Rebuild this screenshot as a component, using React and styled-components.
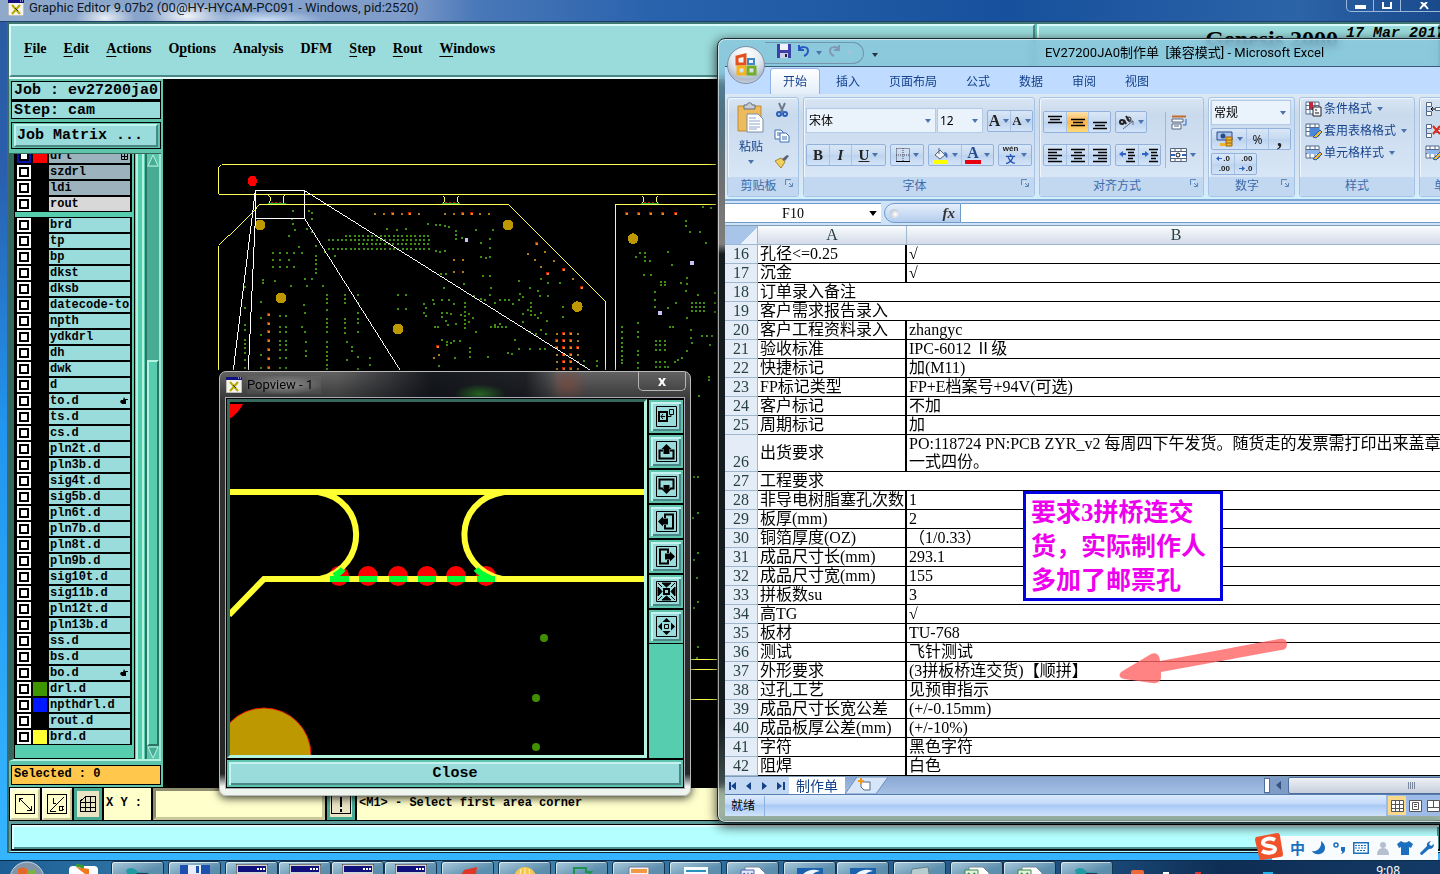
import React from "react";
import styled, { createGlobalStyle, css } from "styled-components";

const GlobalStyle = createGlobalStyle`
    *{
        box-sizing:border-box;
    }

    body{
        margin:0;
        overflow:hidden;
        background:#000;
    }

    button, input, select{
        margin:0;
        padding:0;
        border:0;
        border-radius:0;
        background:none;
        color:inherit;
        font:inherit;
        outline:none;
    }
`

const mono = `"Liberation Mono","Courier New",monospace`;
const serif = `"Liberation Serif","Noto Sans CJK SC",serif`;
const sans = `"Noto Sans","Noto Sans CJK SC",sans-serif`;
const caption = `Roboto,"Noto Sans CJK SC",sans-serif`;

const bevelOut = css`
    border:2px solid;
    border-color:#bff3ef #4b8786 #4b8786 #bff3ef;
`

const Desktop = styled.main`
    position:relative;
    display:flex;
    flex-direction:column;
    height:100vh;
    overflow:hidden;
    font-family:${sans};
    font-size:12px;
    color:#000;
`

/* ---------- editor window ---------- */

const EditorWindow = styled.section`
    flex:1;
    min-height:0;
    display:flex;
    flex-direction:column;
    padding:0 0 7px 7px;
    border-bottom:1px solid #0b2c4d;
    background:linear-gradient(#2b5b9f 0, #2a5fae 20%, #2196f0 50%, #35b5ff 100%);
`

const EditorTitle = styled.header`
    flex:none;
    display:flex;
    align-items:flex-start;
    gap:5px;
    height:22px;
    margin-left:-7px;
    padding-left:8px;
    overflow:hidden;
    color:#0b1622;
    font:13px/15px ${caption};
    background:
        radial-gradient(ellipse 30px 14px at 105px 18px, rgba(255,255,255,.8), transparent),
        radial-gradient(ellipse 40px 14px at 187px 16px, rgba(255,255,255,.9), transparent),
        radial-gradient(ellipse 60px 10px at 265px 20px, rgba(220,238,255,.8), transparent),
        linear-gradient(90deg, #8fa9cb 0, #7f9cca 28%, #4a78b8 33%, #2a63ad 45%, #17509c 70%, #2c64a8 90%, #194a8c 100%);
    border-bottom:1px solid #1e3f6c;
`

const TitleIcon = styled.svg`
    flex:none;
    width:16px;
    height:16px;
`

const WindowControls = styled.div`
    display:flex;
    height:12px;
    margin-left:auto;
    margin-right:-8px;
    border:1px solid #9bb8dc;
    border-top:0;
    border-radius:0 0 5px 5px;
    overflow:hidden;

    button{
        display:grid;
        place-items:center;
        width:27px;
        height:11px;
        color:#fff;
        border-right:1px solid #9bb8dc;
    }

    button:last-child{
        width:46px;
        border-right:0;
    }
`

const EditorBody = styled.div`
    flex:1;
    min-height:0;
    display:flex;
    flex-direction:column;
    background:#5fc4ac;
    border-left:2px solid #3c6b68;
`

const MenuRow = styled.div`
    flex:none;
    display:flex;
    height:57px;
    border-top:2px solid #3f7774;
    border-bottom:2px solid #e4fbfa;
`

const MenuBar = styled.nav`
    display:flex;
    align-items:center;
    gap:17px;
    width:1026px;
    padding:0 13px 4px;
    border:2px solid;
    border-color:#d8fbf9 #4b8786 #4b8786 #d8fbf9;
    background:#9adbdb;
    font:bold 14px/20px ${serif};

    u{
        text-underline-offset:3px;
        text-decoration-thickness:1px;
    }
`

const Brand = styled.div`
    flex:1;
    display:flex;
    align-items:flex-start;
    justify-content:flex-end;
    gap:8px;
    margin-left:2px;
    white-space:nowrap;
    border:2px solid;
    border-color:#d8fbf9 #4b8786 #4b8786 #d8fbf9;
    background:#9adbdb;

    strong{
        font:bold 24px/26px ${serif};
    }

    time{
        font:italic bold 15px/16px ${mono};
        width:92px;
    }
`

const WorkRow = styled.div`
    flex:1;
    min-height:0;
    display:flex;
    background:#000;
`

const Sidebar = styled.aside`
    flex:none;
    display:flex;
    flex-direction:column;
    width:154px;
    padding:2px;
    background:#5fc4ac;
`

const InfoLine = styled.div`
    flex:none;
    height:19px;
    padding:0 2px;
    border:1px solid #000;
    background:#9adbdb;
    font:bold 15px/18px ${mono};
    white-space:nowrap;

    & + &{
        border-top-width:2px;
    }
`

const MatrixFrame = styled.div`
    flex:none;
    height:27px;
    margin:3px 0 4px;
    padding:1px 2px;
    border:1px solid #000;

    button{
        display:block;
        width:100%;
        height:23px;
        padding:0 1px;
        text-align:left;
        background:#9adbdb;
        font:bold 15px/18px ${mono};
        ${bevelOut}
    }
`

const ListWell = styled.div`
    flex:1;
    min-height:0;
    display:flex;
    margin-left:-2px;
    border-left:5px solid #35695c;
    border-top:1px solid #35695c;
    border-bottom:2px solid #b4f3e0;
`

const LayerColumn = styled.div`
    flex:none;
    width:121px;
    overflow:hidden;
    border:1px solid #000;
    border-top:0;
    padding-right:2px;
    background:#55cdae;
`

const LayerBlock = styled.div`
    background:#000;
    padding:1px 2px;
    margin-bottom:5px;
    margin-top:${p => (p.$clipped ? "-6px" : "0")};
`

const LayerRow = styled.label`
    display:grid;
    grid-template-columns:14px 14px 1fr;
    column-gap:2px;
    height:14px;
    margin-bottom:2px;
    background:#000;

    &:last-child{
        margin-bottom:0;
    }

    input{
        appearance:none;
        width:14px;
        height:14px;
        border:2px solid ${p => (p.$marked ? "#0b14a8" : "#fff")};
        background:#fff;
        box-shadow:inset 0 0 0 2px #000;
    }
`

const Swatch = styled.i`
    background:${p => p.$color || "#000"};
`

const LayerName = styled.span`
    display:flex;
    align-items:center;
    justify-content:space-between;
    padding:0 2px 0 1px;
    overflow:hidden;
    background:${p => p.$tone || "#9adbdb"};
    font:bold 12px/14px ${mono};
    white-space:nowrap;
`

const Rails = styled.div`
    width:12px;
    border-right:2px solid #2a7565;
    background:linear-gradient(90deg, #55cdae 1px, #b4f3e0 1px 3px, #55cdae 3px 7px, #b4f3e0 7px 9px, #55cdae 9px);
`

const ScrollTrack = styled.div`
    flex:1;
    display:flex;
    flex-direction:column;
    border-right:2px solid #9fe8d5;
    background:#48ac94;

    svg{
        flex:none;
        display:block;
    }
`

const ScrollGap = styled.div`
    flex:195 1 0;
`

const ScrollThumb = styled.div`
    flex:385 1 0;
    border:2px solid;
    border-color:#b4f3e0 #2a7565 #2a7565 #b4f3e0;
    background:#55cdae;
`

const Selected = styled.div`
    flex:none;
    height:20px;
    margin-top:4px;
    padding:0 2px;
    border:1px solid #000;
    background:#ffc84c;
    font:bold 12px/16px ${mono};
`

const Board = styled.div`
    flex:1;
    min-width:0;
    overflow:hidden;
    background:#000;

    svg{
        display:block;
    }
`

const CommandRow = styled.div`
    flex:none;
    display:flex;
    gap:2px;
    height:34px;
    padding:1px 0 1px 1px;
    background:#000;
    font:bold 12px/30px ${mono};
`

const CommandButton = styled.button`
    display:grid;
    place-items:center;
    width:${p => (p.$on ? "28px" : "30px")};
    border:2px solid;
    border-color:#fffff0 #c9c79c #c9c79c #fffff0;
    background:#ffffcc;
    ${p => p.$on && css`
        border:3px solid #45a993;
        background:#e8e4c4;
    `}
`

const CoordLabel = styled.label`
    width:47px;
    padding-left:2px;
    background:#ffffcc;
`

const CoordInput = styled.input`
    width:172px;
    padding:0 6px;
    border:3px solid;
    border-color:#8f8d70 #c9c79c #c9c79c #8f8d70;
    background:#ffffcc;
`

const Message = styled.output`
    flex:1;
    padding-left:2px;
    background:#ffffcc;
    white-space:nowrap;
`

const MessageBar = styled.div`
    flex:none;
    height:32px;
    margin-right:-2px;
    border:2px solid #5f9c9c;
    border-top-width:3px;
    border-bottom:3px double #123;
    background:#b4ffff;
    box-shadow:inset 0 0 0 1px #000, inset 3px 3px 0 #e6ffff, inset -3px -3px 0 #4f9090;
`

/* ---------- popview window ---------- */

const PopWindow = styled.section`
    position:absolute;
    left:219px;
    top:371px;
    width:472px;
    height:425px;
    display:flex;
    flex-direction:column;
    padding:0 6px 7px;
    border:1px solid #b9b9b9;
    border-radius:7px;
    background:
        radial-gradient(ellipse 26px 10px at 260px 22px, rgba(50,150,40,.6), transparent),
        radial-gradient(ellipse 20px 20px at 348px 12px, rgba(150,70,55,.45), transparent),
        linear-gradient(90deg, transparent 25%, rgba(5,8,15,.8) 45%, rgba(5,8,15,.7) 65%, transparent 72%) 0 0 / 100% 26px no-repeat,
        linear-gradient(rgba(130,130,130,.75) 0, rgba(75,75,75,.7) 30px, rgba(50,55,52,.7) 95%, #eef5ee 98%);
    backdrop-filter:blur(5px);
    box-shadow:0 2px 8px rgba(0,0,0,.8);
`

const PopTitle = styled.header`
    flex:none;
    display:flex;
    align-items:center;
    gap:5px;
    height:26px;
    color:#050505;
    font:13px/18px ${caption};

    span{
        padding:0 8px 0 0;
        background:radial-gradient(ellipse, rgba(160,160,160,.8), rgba(150,150,150,.1) 75%);
    }

    button{
        align-self:flex-start;
        width:48px;
        height:19px;
        margin-left:auto;
        margin-right:-2px;
        border:1px solid #b4b4b4;
        border-top:0;
        border-radius:0 0 5px 5px;
        color:#fff;
        font:bold 14px/16px ${sans};
    }
`

const PopClient = styled.div`
    flex:1;
    min-height:0;
    display:flex;
    flex-direction:column;
    border:1px solid #000;
    outline:1px solid #aab;
    background:#000;
`

const PopMain = styled.div`
    flex:1;
    min-height:0;
    display:flex;
    gap:2px;
`

const PopCanvas = styled.div`
    flex:1;
    min-width:0;
    overflow:hidden;
    border:3px solid;
    border-color:#35695c #b4f3e0 #b4f3e0 #35695c;
    background:#000;

    svg{
        display:block;
    }
`

const ToolColumn = styled.div`
    display:flex;
    flex-direction:column;
    gap:2px;
    width:34px;
    padding-top:1px;
    background:linear-gradient(#000 245px, #55cdae 245px);

    button{
        display:grid;
        place-items:center;
        height:33px;
        border:2px solid #5fc4ac;
        background:#9adbdb;
        box-shadow:inset 2px 2px 0 #c5f3f1, inset -2px -2px 0 #4b8786;
    }
`

const PopClose = styled.button`
    flex:none;
    height:27px;
    margin-top:2px;
    border:2px solid #5fc4ac;
    background:#9adbdb;
    box-shadow:inset 2px 2px 0 #c5f3f1, inset -2px -2px 0 #4b8786;
    font:bold 15px/20px ${mono};
`

/* ---------- spreadsheet window ---------- */

const SheetWindow = styled.section`
    position:absolute;
    left:717px;
    right:-14px;
    top:38px;
    display:flex;
    flex-direction:column;
    padding:0 7px 6px;
    border:1px solid #1b2a30;
    border-radius:8px;
    background:linear-gradient(rgba(135,195,222,.74) 0, rgba(125,185,215,.62) 70px, rgba(150,150,150,.75) 150px, rgba(170,170,170,.75) 205px, rgba(40,55,60,.5) 215px, rgba(40,55,60,.5) 680px, rgba(120,150,150,.7) 100%);
    backdrop-filter:blur(4px);
    box-shadow:inset 0 0 0 1px rgba(255,255,255,.6), 0 3px 12px rgba(0,0,0,.8);
`

const SheetTitle = styled.header`
    display:flex;
    align-items:center;
    height:27px;
    padding-left:40px;

    h1{
        flex:1;
        margin:0;
        padding-left:45px;
        font:400 13px/18px ${caption};
        text-align:center;
        white-space:pre;
    }
`

const Orb = styled.button`
    position:absolute;
    left:9px;
    top:7px;
    display:grid;
    place-items:center;
    width:38px;
    height:38px;
    border:1px solid #7e8fa5;
    border-radius:50%;
    background:radial-gradient(circle at 50% 20%, #fff 0, #e4e9f0 45%, #b0bccb 75%, #eef3f8 100%);
`

const QuickBar = styled.div`
    display:flex;
    align-items:center;
    gap:6px;
    height:22px;
    padding:0 10px 0 12px;
    border:1px solid #7396ad;
    border-left:0;
    border-radius:0 11px 11px 0;
`

const QuickMore = styled.button`
    margin-left:8px;
`

const Tabs = styled.nav`
    display:flex;
    align-items:flex-end;
    gap:5px;
    height:28px;
    padding-left:46px;
    border-top:1px solid #3a5a7a;
    background:#bfdbff;
`

const Tab = styled.button`
    height:25px;
    padding:0 12px;
    border-radius:3px 3px 0 0;
    color:#15428b;
    line-height:20px;
    ${p => p.$active && css`
        background:linear-gradient(#fff, #e3edf9);
        box-shadow:0 0 0 1px #8db2e3;
    `}
`

const Ribbon = styled.div`
    display:flex;
    gap:4px;
    height:107px;
    padding:3px 2px;
    overflow:hidden;
    border-bottom:2px solid #7fa5d6;
    background:linear-gradient(#dde8f4, #c9daed 20%, #d8e6f6 80%, #d0f0fc);
    color:#15428b;
`

const Group = styled.fieldset`
    flex:none;
    display:flex;
    flex-direction:column;
    width:${p => p.$w}px;
    min-width:0;
    height:100px;
    margin:0;
    padding:0;
    border:1px solid #a6c3e4;
    border-radius:3px;
    overflow:hidden;
    box-shadow:inset 1px 1px 0 #eff6fd;
`

const GroupBody = styled.div`
    flex:1;
    display:flex;
    gap:${p => p.$gap || 0}px;
    flex-direction:${p => (p.$column ? "column" : "row")};
    padding:${p => p.$pad || "4px 3px"};
`

const GroupLabel = styled.div`
    display:flex;
    height:19px;
    padding:0 4px;
    background:#c1d8f0;
    color:#3e6aaa;
    line-height:18px;

    span{
        flex:1;
        text-align:center;
    }

    svg{
        margin-top:2px;
    }
`

const Stack = styled.div`
    display:flex;
    flex-direction:column;
    align-items:${p => p.$align || "flex-start"};
    gap:${p => p.$gap || 0}px;
    padding-top:${p => p.$top || 0}px;
`

const Line = styled.div`
    display:flex;
    align-items:center;
    gap:${p => p.$gap || 4}px;
`

const PasteButton = styled.button`
    display:flex;
    flex-direction:column;
    align-items:center;
    gap:4px;
    width:46px;
    line-height:18px;
`

const Combo = styled.label`
    display:flex;
    align-items:center;
    width:${p => p.$w}px;
    height:25px;
    padding:0 4px 0 2px;
    border:1px solid #b3cbe6;
    background:#eaf2fb;
    color:#000;

    select{
        flex:1;
        min-width:0;
        appearance:none;
    }
`

const Segment = styled.div`
    display:flex;
    height:22px;
    border:1px solid #92b2db;
    border-radius:2px;
    background:linear-gradient(#d9e7f7, #c6d9f0 50%, #bcd2ee 50%, #d3e4f8);

    button + button{
        border-left:1px solid #a9c3e4;
    }
`

const Tool = styled.button`
    display:flex;
    align-items:center;
    justify-content:center;
    gap:3px;
    width:${p => p.$w || 22}px;
    color:#222;
    ${p => p.$on && css`
        background:linear-gradient(#fde3a9, #fbb54c 50%, #fdd876);
    `}
`

const Glyph = styled.span`
    font:${p => (p.$italic ? "italic " : "")}bold ${p => p.$size || 15}px/18px "Liberation Serif",serif;
    text-decoration:${p => (p.$under ? "underline" : "none")};
`

const Divider = styled.i`
    width:1px;
    height:56px;
    margin:10px 4px 0;
    background:#9cb9dc;
`

const StyleButton = styled.button`
    display:flex;
    align-items:center;
    gap:2px;
    height:22px;
    color:#15428b;
    line-height:18px;
    white-space:nowrap;

    span{
        margin-right:3px;
    }
`

const FormulaRow = styled.div`
    display:flex;
    align-items:center;
    height:25px;
    border-bottom:1px solid #7f9db9;
    background:#cfe3f8;
    font:16px/19px ${serif};
`

const NameBox = styled.label`
    display:flex;
    align-items:center;
    width:156px;
    height:20px;
    padding-right:4px;
    background:#fff;
    border-top:1px solid #6f9bc8;
    border-bottom:1px solid #6f9bc8;

    input{
        flex:1;
        min-width:0;
        padding-right:8px;
        text-align:center;
        font-size:14px;
    }

    svg{
        width:8px;
        height:5px;
    }
`

const FxButton = styled.button`
    display:flex;
    align-items:center;
    justify-content:space-between;
    width:77px;
    height:20px;
    margin-left:3px;
    padding:0 5px;
    border:1px solid #6f9bc8;
    border-radius:10px 0 0 10px;
    background:linear-gradient(#e5effb, #b4cdee);
    font:italic bold 15px/18px ${serif};
    color:#333;

    i{
        width:9px;
        height:9px;
        border-radius:50%;
        background:radial-gradient(circle at 60% 60%, #fff, #a5b1c2);
    }
`

const FormulaInput = styled.input`
    flex:1;
    height:20px;
    background:#fff;
    border-top:1px solid #6f9bc8;
    border-bottom:1px solid #6f9bc8;
`

const SheetArea = styled.div`
    position:relative;
    background:#fff;
`

const Grid = styled.table`
    width:100%;
    table-layout:fixed;
    border-collapse:separate;
    border-spacing:0;
    font:16px/18px ${serif};

    th, td{
        height:19px;
        padding:0 2px;
        overflow:hidden;
        white-space:nowrap;
        text-align:left;
        font-weight:400;
    }

    td{
        border-bottom:1px solid #000;
        border-right:2px solid #000;
    }

    td:last-child{
        border-right:0;
    }

    thead th{
        text-align:center;
        color:#27413e;
        border-right:1px solid #9eb6ce;
        border-bottom:1px solid #9eb6ce;
        background:linear-gradient(#f9fcfd, #d3dbe9);
    }

    thead th:first-child{
        background:linear-gradient(135deg, #a9c4e9 68%, #eaf1fa 68%);
    }

    tbody th{
        text-align:center;
        vertical-align:bottom;
        color:#27413e;
        border-right:1px solid #9eb6ce;
        border-bottom:1px solid #9eb6ce;
        background:#e4ecf7;
    }
`

const Callout = styled.aside`
    position:absolute;
    left:298px;
    top:265px;
    width:200px;
    height:110px;
    padding:2px 5px;
    border:3px solid #0000e0;
    background:#fff;
    color:#ee00ee;
    font:bold 25px/34px ${serif};
    white-space:nowrap;
`

const PointerArrow = styled.svg`
    position:absolute;
    left:390px;
    top:411px;
`

const SheetTabs = styled.div`
    display:flex;
    align-items:stretch;
    height:18px;
    border-top:1px solid #7f9db9;
    background:linear-gradient(#89a8d4, #a5c0e4);
`

const NavButtons = styled.div`
    display:flex;
    width:64px;
    background:#c3d8f2;

    button{
        flex:1;
        display:grid;
        place-items:center;
    }
`

const SheetTab = styled.button`
    width:56px;
    padding:0 6px;
    background:#fff;
    color:#15428b;
    font-size:14px;
    line-height:16px;
    white-space:nowrap;
`

const ScrollEnd = styled.div`
    display:flex;
    align-items:center;
    gap:6px;
    width:182px;
    margin-left:auto;
    background:#7f9cc6;
`

const SplitHandle = styled.i`
    width:6px;
    height:15px;
    border:1px solid #4e6c9c;
    background:#fff;
`

const HThumb = styled.div`
    flex:1;
    display:grid;
    place-items:center;
    height:17px;
    padding-left:90px;
    border:1px solid #4e6c9c;
    border-radius:2px;
    background:linear-gradient(#eef1f6, #c6cedb);
`

const StatusBar = styled.footer`
    display:flex;
    align-items:center;
    height:22px;
    padding-left:6px;
    border-top:1px solid #567db0;
    background:linear-gradient(#dcebfd, #c4dbf9 40%, #a9caf5 50%, #cfe3fc);
    line-height:20px;

    span{
        width:34px;
        border-right:1px solid #8fb0dc;
    }
`

const ViewButtons = styled.div`
    display:flex;
    width:60px;
    height:100%;
    margin-left:auto;
    padding:1px 2px;
    background:#9dbbe6;

    button{
        display:grid;
        place-items:center;
        width:18px;
    }

    button:first-child{
        background:#fbd98a;
    }
`

/* ---------- input bar and taskbar ---------- */

const InputBar = styled.div`
    position:absolute;
    right:2px;
    bottom:14px;
    display:flex;
    align-items:center;
    gap:6px;
    height:24px;
    padding-right:3px;
    background:#f8fcff;
    color:#1c6fbe;
    font:bold 15px/20px "Noto Sans CJK SC",sans-serif;

    svg{
        flex:none;
    }
`

const ImeLogo = styled.svg`
    margin:-4px 0 0 -18px;
`

const Taskbar = styled.footer`
    position:relative;
    flex:none;
    display:flex;
    align-items:flex-start;
    gap:4px;
    height:13px;
    overflow:hidden;
    background:linear-gradient(90deg, #1d5f94 0, #4d93bd 25%, #2f6f9d 50%, #1c4f80 75%, #0e2d54 85%, #133a66 100%);

    & > svg{
        flex:none;
    }
`

const TaskRun = styled.div`
    flex:none;
    display:flex;
`

const TaskButton = styled.button`
    display:grid;
    justify-items:center;
    align-items:start;
    width:53px;
    height:40px;
    padding-top:2px;
    border:1px solid #16344e;
    border-radius:3px;
    background:linear-gradient(160deg, #a9cbdc, #5d8fae 40%, #4f83a6);
    box-shadow:inset 1px 1px 0 rgba(255,255,255,.6);
`

const Clock = styled.time`
    margin-left:auto;
    margin-right:40px;
    padding-top:3px;
    color:#fff;
    line-height:14px;
`

/* ---------- icons ---------- */

const Caret = ({ color = "#4a73ad" }) => (
    <svg width="6" height="4" viewBox="0 0 6 4"><path d="M0 0h6L3 4z" fill={color} /></svg>
);

const AppIcon = () => (
    <TitleIcon viewBox="0 0 16 16">
        <path d="M0 0h16v16H0z" fill="#f4f4ec" stroke="#888" />
        <path d="M0 0h16v3H0z" fill="#101080" />
        <path d="M12 1h1M14 1h1" stroke="#fff" />
        <path d="M4 5l8 9M12 5l-8 9" stroke="#b5a800" strokeWidth="2" />
        <path d="M7 8l3 3" stroke="#333" />
    </TitleIcon>
);

const Hand = () => (
    <svg width="8" height="8" viewBox="0 0 8 8"><path d="M4 0l1 2h3v1H6v4H2L0 5l1-2h2z" fill="#000" /></svg>
);

const Launcher = () => (
    <svg width="9" height="9" viewBox="0 0 9 9" fill="none" stroke="#5f86b8">
        <path d="M.5 6V.5H6" /><path d="M3 3l4 4" stroke="#fff" /><path d="M7.500 4v3.500H4M4 4l3 3" />
    </svg>
);

const GridMark = () => (
    <svg width="7" height="7" viewBox="0 0 7 7"><path d="M.5.5h6v6h-6zM3.500 0v7M0 3.500h7" fill="none" stroke="#000" /></svg>
);

const CommandIcon = ({ kind }) => (
    <svg width="20" height="20" viewBox="0 0 20 20" fill="none" stroke="#000" shapeRendering="crispEdges">
        {kind !== "grid" && <path d="M.5.5h19v19H.5z" />}
        {kind === "diag" && <path d="M4 4l12 12M4 8V4h4M16 12v4h-4" />}
        {kind === "angle" && <path d="M3 17L17 3M6 4v5h3M3 17h6M12 12h3v4h-3zM17 12l-2 2 2 2" />}
        {kind === "grid" && <path d="M2.500 7l5-4.500h10v15h-15zM7.500 2v16M12.500 2v16M2 8.500h16M2 13.500h16" />}
        {kind === "bang" && <path d="M10 3v10M10 15v3" strokeWidth="2" />}
    </svg>
);

const toolPaths = {
    link: <><path d="M3 6h8v9H3z" fill="none" stroke="#000" strokeWidth="2" /><path d="M13.500 3.500h4v5h-4zM11 10.500h4V8M9 10.500H5M7 8l-2 2.500L7 13" fill="none" stroke="#000" /></>,
    up: <><path d="M7 9.500H3.500v8h14v-8H14" fill="none" stroke="#000" strokeWidth="2" /><path d="M10.500 3l5 5h-2v5h-6V8h-2z" /></>,
    down: <><path d="M7 12.500H3.500v-9h14v9H14" fill="none" stroke="#000" strokeWidth="2" /><path d="M10.500 18l5-5h-2V9h-6v4h-2z" /></>,
    left: <><path d="M9 7V3.500h8v14H9V14" fill="none" stroke="#000" strokeWidth="2" /><path d="M2 10.500l5-5v2h5v6H7v2z" /></>,
    right: <><path d="M12 7V3.500H4v14h8V14" fill="none" stroke="#000" strokeWidth="2" /><path d="M19 10.500l-5-5v2H9v6h5v2z" /></>,
    shrink: <><path d="M8 8h5v5H8z" fill="none" stroke="#000" strokeWidth="2" /><path d="M6 2h9l-4.500 4zM6 19h9l-4.500-4zM2 6v9l4-4.500zM19 6v9l-4-4.500zM2 2l4 4M19 2l-4 4M2 19l4-4M19 19l-4-4" stroke="#000" /></>,
    grow: <><path d="M8.500 8.500h4v4h-4z" fill="none" stroke="#000" /><path d="M10.500 2l4 4h-8zM10.500 19l4-4h-8zM2 10.500l4-4v8zM19 10.500l-4-4v8z" /></>
};

const ToolIcon = ({ kind }) => (
    <svg width="21" height="21" viewBox="0 0 21 21">
        <path d="M.5.5h20v20H.5z" fill="none" stroke="#000" />
        {toolPaths[kind]}
    </svg>
);

const alignRows = {
    top: "M2 3.500h14M4 6.500h10M2 9.500h14",
    middle: "M2 6.500h14M4 9.500h10M2 12.500h14",
    bottom: "M2 9.500h14M4 12.500h10M2 15.500h14",
    left: "M2 3.500h14M2 6.500h9M2 9.500h14M2 12.500h9M2 15.500h14",
    center: "M2 3.500h14M5 6.500h8M2 9.500h14M5 12.500h8M2 15.500h14",
    right: "M2 3.500h14M7 6.500h9M2 9.500h14M7 12.500h9M2 15.500h14",
    outdent: "M8 3.500h9M10 6.500h6M10 9.500h7M10 12.500h5M8 15.500h9",
    indent: "M8 3.500h9M10 6.500h6M10 9.500h7M10 12.500h5M8 15.500h9"
};

const AlignIcon = ({ kind }) => (
    <svg width="18" height="18" viewBox="0 0 18 18">
        <path d={alignRows[kind]} stroke="#000" fill="none" strokeWidth="1.300" />
        {kind === "outdent" && <path d="M1 8l4-3v2h3v2H5v2z" fill="#2e62c4" />}
        {kind === "indent" && <path d="M8 8L4 5v2H1v2h3v2z" fill="#2e62c4" />}
    </svg>
);

const AngleTextIcon = () => (
    <svg width="17" height="16" viewBox="0 0 17 16" fill="none" stroke="#222">
        <circle cx="4" cy="8" r="2" strokeWidth="2" /><path d="M6 6l2 4M8 2l4 6" strokeWidth="2" /><circle cx="11" cy="5" r="2" /><path d="M5 15L15 7M15 11V7h-4" stroke="#667" />
    </svg>
);

const OfficeMark = () => (
    <svg width="24" height="24" viewBox="0 0 24 24" fill="none" strokeWidth="3">
        <path d="M3 4l8-2v9H3z" stroke="#e2501b" />
        <path d="M14 6h6v5h-6z" stroke="#3f86d0" strokeWidth="2" />
        <path d="M4 14h7v7H4z" stroke="#f6b21b" />
        <path d="M14 14h7v7h-7z" stroke="#72ae2d" />
    </svg>
);

const SaveIcon = () => (
    <svg width="14" height="14" viewBox="0 0 14 14">
        <path d="M0 0h14v14H0z" fill="#3c3fa6" /><path d="M3 0h8v6H3z" fill="#eef2ff" /><path d="M3 9h8v5H3z" fill="#c8cfe8" /><path d="M8 10h2v3H8z" fill="#223" />
    </svg>
);

const UndoIcon = ({ redo }) => (
    <svg width="13" height="13" viewBox="0 0 13 13" fill="none" stroke={redo ? "#8098b4" : "#2757c0"} strokeWidth="2">
        <g transform={redo ? "translate(13 0) scale(-1 1)" : undefined}><path d="M2 1v5h5M2 6c2-4 9-4 9 1 0 3-2 4-4 5" /></g>
    </svg>
);

const PasteIcon = () => (
    <svg width="28" height="32" viewBox="0 0 28 32">
        <path d="M1 4h23v25H1z" fill="#edbb5c" stroke="#c08a34" />
        <path d="M7 5V3h3c0-3 5-3 5 0h3v4H7z" fill="#c9cdd4" stroke="#676d78" />
        <path d="M10 12h11l5 5v13H10z" fill="#fff" stroke="#7a8ca8" />
        <path d="M12 16h7M12 19h11M12 22h11M12 25h11M12 27h8" stroke="#8ba6cf" />
    </svg>
);

const ScissorsIcon = () => (
    <svg width="14" height="16" viewBox="0 0 14 16" fill="none" strokeWidth="2">
        <path d="M4 1l4 9M10 1L6 10" stroke="#6f7c90" /><circle cx="4" cy="12" r="2" stroke="#2d5fb8" /><circle cx="10" cy="12" r="2" stroke="#2d5fb8" />
    </svg>
);

const CopyIcon = () => (
    <svg width="16" height="14" viewBox="0 0 16 14" fill="#fff" stroke="#3f6fb5">
        <path d="M1 1h6l2 2v7H1z" /><path d="M6 4h6l3 3v6H6z" /><path d="M8 8h5M8 10h5M3 4h3M3 6h3" />
    </svg>
);

const BrushIcon = () => (
    <svg width="16" height="14" viewBox="0 0 16 14">
        <path d="M1 7l6-3 4 4-4 6z" fill="#f0cf5c" stroke="#a8842a" /><path d="M8 5l5-4 2 1-4 5z" fill="#5d6470" />
    </svg>
);

const BorderIcon = () => (
    <svg width="14" height="14" viewBox="0 0 14 14" fill="none" stroke="#445">
        <path d="M.5.5h13v13M.5.5v13M7 0v13M0 7h13" strokeDasharray="1 1" /><path d="M0 13.500h14" stroke="#000" />
    </svg>
);

const FillIcon = () => (
    <svg width="17" height="17" viewBox="0 0 17 17">
        <path d="M3 8l5-5 5 5-5 4z" fill="#eef3fa" stroke="#56647a" /><path d="M7 1v6" stroke="#56647a" /><path d="M12 5c4 0 4 4 3 6-2-1-2-4-3-6z" fill="#3c6cc0" /><path d="M1 13h15v4H1z" fill="#ff0" />
    </svg>
);

const FontColor = styled.span`
    height:18px;
    border-bottom:4px solid #e60012;
    color:#274b8f;
    font:bold 16px/14px "Liberation Serif",serif;
    padding:0 2px;
`

const Wen = styled.span`
    color:#222;
    font:bold 8px/8px "Liberation Sans",sans-serif;

    b{
        display:block;
        color:#2450b0;
        font:bold 10px/12px "Noto Sans CJK SC",sans-serif;
    }
`

const Decimals = styled.span`
    color:#222;
    font:bold 8px/10px "Liberation Sans",sans-serif;
    text-align:right;

    svg{
        margin-right:1px;
    }
`

const SmallArrow = ({ right }) => (
    <svg width="6" height="5" viewBox="0 0 6 5"><path d={right ? "M6 2.500L3 0v2H0v1h3v2z" : "M0 2.500L3 0v2h3v1H3v2z"} fill="#2e62c4" /></svg>
);

const WrapIcon = () => (
    <svg width="17" height="16" viewBox="0 0 17 16" fill="none">
        <path d="M1 2.500h14" stroke="#c66a2a" strokeWidth="2" /><path d="M1 5h11v3H1zM1 10h9v5H1z" fill="#fff" stroke="#54647e" /><path d="M3 12h5" stroke="#54647e" /><path d="M15 5v6h-3" stroke="#2e62c4" />
    </svg>
);

const MergeIcon = () => (
    <svg width="17" height="16" viewBox="0 0 17 16">
        <path d="M.5 1.500h16v13H.5zM5 1v3M11 1v3M5 12v3M11 12v3M.5 4.500h16M.5 11.500h16" fill="#fff" stroke="#54647e" />
        <path d="M1 8h4M12 8h4" stroke="#2e62c4" strokeWidth="2" /><circle cx="8" cy="8" r="2" fill="none" stroke="#111" />
    </svg>
);

const MoneyIcon = () => (
    <svg width="18" height="16" viewBox="0 0 18 16">
        <path d="M1 1h15v8H1z" fill="#a8c4ee" stroke="#284a88" /><circle cx="7" cy="5" r="2.500" fill="#284a88" />
        <path d="M10 6h6v9h-6z" fill="#f0b32e" stroke="#96650c" /><path d="M10 9h6M10 12h6" stroke="#96650c" /><path d="M4 12h5v3H4z" fill="#f0b32e" />
    </svg>
);

const StyleIcon = ({ kind }) => (
    <svg width="17" height="16" viewBox="0 0 17 16">
        {kind !== "insert" && kind !== "delete" && <path d="M1 1h13v12H1zM1 4.500h13M1 8.500h13M5 1v12M10 1v12" fill="#fff" stroke="#52698c" />}
        {kind === "cond" && <><path d="M4 1h4v7H4z" fill="#c2273c" /><path d="M8 6h8v9H8z" fill="#f4f6fb" stroke="#222" /><path d="M10 9h2M10 12h4" stroke="#111" /></>}
        {kind === "table" && <path d="M5 5h9v8H5z" fill="#4d87da" />}
        {kind === "cell" && <path d="M2 5h11v4H2z" fill="#8cb6ee" />}
        {(kind === "table" || kind === "cell") && <path d="M8 14l7-7 2 2-6 6z" fill="#e8b93b" stroke="#2b57a8" />}
        {(kind === "insert" || kind === "delete") && <path d="M1.500 1.500h5v4h-5zM1.500 10.500h5v4h-5zM1.500 5.500v5M10.500 6.500h6v3h-6z" fill="#fff" stroke="#52698c" />}
        {kind === "insert" && <path d="M10 8H6M8 6L6 8l2 2" stroke="#000" fill="none" />}
        {kind === "delete" && <path d="M8 3l7 8M15 3l-7 8" stroke="#e02a1a" strokeWidth="2" />}
    </svg>
);

/* ---------- drawings ---------- */

// board drawing units: 3 per screen pixel
const range = (from, to, step) => {
    const out = [];
    for (let v = from; v <= to; v += step) out.push(v);
    return out;
};
const cross = (xs, ys) => ys.flatMap(y => xs.map(x => [x, y]));
const snap = v => Math.round(v / 3) * 3;

const greenDots = [
    ...cross(range(357, 660, 13), [269, 296]),
    ...cross(range(408, 660, 13), [257]),
    ...cross(range(446, 660, 13), [283]),
    ...cross([189, 210, 231, 252], [308, 350]),
    ...cross([189, 210, 237], [329]),
    ...cross([351], [435, 447, 459, 480, 507, 520, 532, 545, 575, 590, 605, 618, 630, 645, 657]),
    ...cross([405], [435, 447, 459, 507, 520, 533, 548]),
    ...cross([444], [435, 460, 490, 508, 520, 545, 620, 657]),
    ...cross([210, 228], [498, 530, 545, 573, 585, 600, 625, 655]),
    ...cross([105], [410, 475, 525, 540, 570, 582, 595, 610, 630, 655]),
    ...cross([153], [455, 503, 555, 615, 655]),
    ...cross([318], [318, 330, 342, 356, 370]),
    ...cross([765], [460, 472, 485, 497, 510, 522, 535]),
    ...cross([963], [460, 472, 484, 496]),
    ...cross(range(870, 910, 14), [450]),
    ...cross(range(843, 890, 11), [530]),
    ...cross([1236], [530, 545, 565, 578, 590, 603, 618, 630, 640]),
    ...cross([1284], [518, 545, 560, 603, 615, 640, 655]),
    ...cross([1338, 1351, 1365], [572, 585, 600, 637, 650]),
    ...cross([1447, 1459, 1471, 1483], [458, 470, 483]),
    ...cross([1353, 1365], [396, 405]),
    ...cross([564, 588], [435, 477]),
    [249, 183], [297, 183], [306, 190], [246, 206], [306, 206], [249, 223], [255, 240], [237, 258], [291, 238], [306, 245],
    [267, 290], [276, 308], [159, 390], [159, 398], [195, 393], [243, 408], [285, 387], [306, 387], [291, 408], [339, 408],
    [282, 465], [285, 488], [276, 530], [285, 545], [288, 575], [288, 603], [288, 618], [318, 287], [345, 305], [375, 318],
    [531, 237], [561, 240], [588, 237], [654, 222], [678, 225], [690, 225], [705, 228], [717, 230], [738, 242], [738, 255],
    [738, 268], [757, 265], [798, 240], [849, 240], [840, 267], [813, 278], [678, 302], [690, 305], [705, 302], [840, 295],
    [813, 320], [827, 324], [840, 322], [693, 372], [708, 372], [819, 378], [840, 378], [702, 413], [762, 402], [642, 462],
    [648, 475], [642, 490], [648, 497], [672, 463], [669, 450], [697, 450], [717, 450], [733, 463], [697, 490], [710, 488],
    [722, 492], [697, 502], [708, 513], [714, 525], [738, 522], [675, 531], [684, 531], [753, 495], [777, 492], [790, 505],
    [777, 515], [798, 545], [792, 437], [813, 448], [840, 435], [855, 458], [825, 450], [843, 413], [927, 393], [930, 432],
    [939, 440], [960, 415], [993, 387], [1014, 398], [1050, 398], [984, 422], [990, 438], [1014, 438], [927, 450], [910, 462],
    [940, 492], [955, 480], [975, 495], [993, 488], [984, 505], [1010, 513], [870, 522], [855, 525], [940, 517], [960, 545],
    [978, 552], [993, 540], [1008, 552], [1059, 470], [1059, 500], [915, 570], [927, 598], [960, 597], [990, 597], [1005, 597],
    [893, 608], [906, 611], [780, 594], [780, 606], [780, 622], [834, 620], [735, 624], [687, 648], [697, 570], [711, 576],
    [722, 578], [733, 572], [750, 573], [711, 585], [411, 575], [426, 590], [426, 603], [411, 630], [480, 624], [480, 645],
    [1122, 632], [1122, 648], [1161, 632], [1161, 648], [1479, 171], [1503, 173], [1428, 213], [1428, 228], [1440, 245],
    [1470, 245], [1488, 278], [1374, 305], [1278, 321], [1290, 309], [1305, 309], [1305, 321], [1305, 333], [1320, 333],
    [1386, 345], [1302, 375], [1323, 375], [1431, 384], [1431, 402], [1413, 399], [1335, 425], [1335, 450], [1335, 470],
    [1428, 422], [1464, 435], [1374, 474], [1398, 458], [1431, 505], [1380, 531], [1390, 531], [1443, 540], [1443, 563],
    [1446, 578], [1476, 557], [1491, 557], [1506, 558], [1431, 603], [1416, 625], [1405, 630], [1395, 636], [1374, 650],
    [1500, 585], [1515, 430], [1515, 460], [1515, 485], [1497, 680], [1497, 690], [1467, 738], [1464, 982], [1452, 982],
    [1464, 1088], [1450, 1103], [1464, 1210], [1452, 1230], [1462, 1285], [1464, 1355], [1452, 1375], [1464, 1490], [1460, 1525]
];

const orangeDots = [
    ...cross([548, 601, 758, 785, 1252, 1288, 1324, 1360, 1398], [192]),
    ...cross([178], [495, 521, 547, 574, 600, 628, 653]),
    ...cross([1061, 1082], [552, 574, 594, 615, 636, 656]),
    [980, 282], [1061, 361], [1116, 415], [1013, 371], [1040, 574], [1040, 594], [1103, 594], [684, 591]
];

const ochreDots = [
    ...cross([495, 522, 575, 628, 705, 732, 811, 838], [192]),
    ...cross([732, 759], [330, 366]),
    ...cross([1040, 1103], [552, 615, 636, 656]),
    [1103, 574], [1006, 307], [1033, 334], [1088, 388], [954, 312], [975, 330], [993, 351], [672, 624], [687, 615]
];

const pads = [[150, 225], [213, 444], [564, 537], [894, 225], [1102, 470], [1269, 266]];

const BoardDrawing = () => (
    <svg width="1277" height="707" viewBox="163 79 1277 707" shapeRendering="crispEdges">
        <g transform="translate(210 150) scale(.33333)" fill="none" strokeWidth="3">
            <g fill="#3f8f10">{greenDots.map(([x, y], i) => <rect key={i} x={snap(x) - 3} y={snap(y) - 3} width="6" height="6" />)}</g>
            <g fill="#b07818">{ochreDots.map(([x, y], i) => <rect key={i} x={snap(x) - 3} y={snap(y) - 3} width="6" height="6" />)}</g>
            {orangeDots.map(([x, y], i) => (
                <g key={i}>
                    <rect x={snap(x) - 6} y={snap(y) - 6} width="9" height="9" fill="#c81e00" />
                    <rect x={snap(x) - 3} y={snap(y) - 3} width="6" height="6" fill="#d98a20" />
                </g>
            ))}
            {pads.map(([x, y], i) => <circle key={i} cx={x} cy={y} r="16" fill="#bd9800" />)}
            <path d="M766 263h8v12h-8zM1440 333h11v11h-11zM1345 484h11v11h-11z" fill="#c3c3f4" />
            <ellipse cx="127" cy="93" rx="14" ry="16" fill="#f00" />
            <path d="M1518 44H35l-9 9v80h1492" stroke="#ffff55" />
            <path d="M26 660V287L133 182l15-18h748l291 291v205M1216 660V164h302" stroke="#ffff55" />
            {[200, 723, 1320].map(x => (
                <g key={x}>
                    <path d={`M${x - 26} 134c10 7 8 20 2 29M${x + 26} 134c-10 7-8 20-2 29`} stroke="#ffff55" />
                    <path d={`M${x - 27} 161h54`} stroke="#22a622" />
                    <path d={`M${x - 18} 159h36`} stroke="#d01010" strokeDasharray="6 6" />
                </g>
            ))}
            <path d="M1440 1530h84M1440 1560h84M1440 1650h84" stroke="#ffff55" />
            <path d="M136 122h148v84H136zM136 122L70 660M136 206L115 660M284 122L1140 660M284 206L570 660" stroke="#fff" />
        </g>
    </svg>
);

const PopDrawing = () => (
    <svg width="416" height="356" viewBox="230 402 416 356">
        <path d="M229 404h14q-5 10-14 15z" fill="#f00" />
        <circle cx="264" cy="755" r="47" fill="#bd9800" stroke="#e01800" />
        <g fill="#f00">{[339, 368, 398, 427, 456, 486].map(x => <circle key={x} cx={x} cy="576" r="10" />)}</g>
        <g fill="none" stroke="#ffff32" strokeWidth="6">
            <path d="M229 492h417M229 615l35-36h382" />
            <path d="M318 492c50 8 51 75 2 87M504 492c-52 8-53 75-2 87" />
        </g>
        <g fill="none" stroke="#00ff32" strokeWidth="6">
            <path d="M330 579h19M359 579h18M389 579h18M418 579h18M447 579h18M477 579h18M334 576q6-3 9-7M476 569q4 5 14 9" />
        </g>
        <g fill="#3f8f00"><circle cx="544" cy="638" r="4" /><circle cx="536" cy="698" r="4" /><circle cx="536" cy="747" r="4" /></g>
    </svg>
);

/* ---------- data ---------- */

const menus = ["File", "Edit", "Actions", "Options", "Analysis", "DFM", "Step", "Rout", "Windows"];
const menuKeys = { File: 0, Edit: 0, Actions: 0, Options: 1, Step: 0, Rout: 0, Windows: 0 };

const topLayers = [
    { name: "drl", color: "#f00", tone: "#9cb3bd", marked: true, mark: <GridMark /> },
    { name: "szdrl", tone: "#9cb3bd" },
    { name: "ldi", tone: "#9cb3bd" },
    { name: "rout", tone: "#d8d8d8" }
];

const layers = [
    "brd", "tp", "bp", "dkst", "dksb", "datecode-to", "npth", "ydkdrl", "dh", "dwk", "d", "to.d", "ts.d", "cs.d",
    "pln2t.d", "pln3b.d", "sig4t.d", "sig5b.d", "pln6t.d", "pln7b.d", "pln8t.d", "pln9b.d", "sig10t.d", "sig11b.d",
    "pln12t.d", "pln13b.d", "ss.d", "bs.d", "bo.d", "drl.d", "npthdrl.d", "rout.d", "brd.d"
].map(name => ({
    name,
    color: { "drl.d": "#3f9500", "npthdrl.d": "#0018ff", "brd.d": "#ffff32" }[name],
    mark: name === "to.d" || name === "bo.d" ? <Hand /> : null
}));

const rows = [
    [16, "孔径<=0.25", "√"],
    [17, "沉金", "√"],
    [18, "订单录入备注"],
    [19, "客户需求报告录入"],
    [20, "客户工程资料录入", "zhangyc"],
    [21, "验收标准", "IPC-6012 Ⅱ级"],
    [22, "快捷标记", "加(M11)"],
    [23, "FP标记类型", "FP+E档案号+94V(可选)"],
    [24, "客户标记", "不加"],
    [25, "周期标记", "加"],
    [26, "出货要求", <>PO:118724 PN:PCB ZYR_v2 每周四下午发货。随货走的发票需打印出来盖章，<br />一式四份。</>],
    [27, "工程要求"],
    [28, "非导电树脂塞孔次数", "1"],
    [29, "板厚(mm)", "2"],
    [30, "铜箔厚度(OZ)", "（1/0.33）"],
    [31, "成品尺寸长(mm)", "293.1"],
    [32, "成品尺寸宽(mm)", "155"],
    [33, "拼板数su", "3"],
    [34, "高TG", "√"],
    [35, "板材", "TU-768"],
    [36, "测试", "飞针测试"],
    [37, "外形要求", "(3拼板桥连交货)【顺拼】"],
    [38, "过孔工艺", "见预审指示"],
    [39, "成品尺寸长宽公差", "(+/-0.15mm)"],
    [40, "成品板厚公差(mm)", "(+/-10%)"],
    [41, "字符", "黑色字符"],
    [42, "阻焊", "白色"]
];

/* ---------- parts ---------- */

function MenuItem({ name }) {
    const at = menuKeys[name];
    if (at === undefined) return <button>{name}</button>;
    return <button>{name.slice(0, at)}<u>{name[at]}</u>{name.slice(at + 1)}</button>;
}

function Layers({ items, clipped }) {
    return (
        <LayerBlock $clipped={clipped}>
            {items.map(layer => (
                <LayerRow key={layer.name} $marked={layer.marked}>
                    <input type="checkbox" />
                    <Swatch $color={layer.color} />
                    <LayerName $tone={layer.tone}>{layer.name}{layer.mark}</LayerName>
                </LayerRow>
            ))}
        </LayerBlock>
    );
}

function RibbonGroup({ label, w, launcher, children }) {
    return (
        <Group $w={w} aria-label={label}>
            {children}
            <GroupLabel><span>{label}</span>{launcher && <Launcher />}</GroupLabel>
        </Group>
    );
}

function Editor() {
    return (
        <EditorWindow>
            <EditorTitle>
                <AppIcon />
                <span>Graphic Editor 9.07b2 (00@HY-HYCAM-PC091 - Windows, pid:2520)</span>
                <WindowControls>
                    <button aria-label="Minimize"><svg width="11" height="8"><path d="M0 3h11v4H0z" fill="#fff" /></svg></button>
                    <button aria-label="Maximize"><svg width="11" height="8"><path d="M1 0v6h8V0" fill="none" stroke="#fff" strokeWidth="2" /></svg></button>
                    <button aria-label="Close"><svg width="11" height="8"><path d="M1 7l4-5 4 5M2 0l3 3 3-3" fill="none" stroke="#fff" strokeWidth="2" /></svg></button>
                </WindowControls>
            </EditorTitle>
            <EditorBody>
                <MenuRow>
                    <MenuBar>{menus.map(name => <MenuItem key={name} name={name} />)}</MenuBar>
                    <Brand><strong>Genesis 2000</strong><time>17 Mar 2017</time></Brand>
                </MenuRow>
                <WorkRow>
                    <Sidebar>
                        <InfoLine>Job : ev27200ja0</InfoLine>
                        <InfoLine>Step: cam</InfoLine>
                        <MatrixFrame><button>Job Matrix ...</button></MatrixFrame>
                        <ListWell>
                            <LayerColumn>
                                <Layers items={topLayers} clipped />
                                <Layers items={layers} />
                            </LayerColumn>
                            <Rails />
                            <ScrollTrack>
                                <svg width="12" height="13"><path d="M0 0h12v13H0z" fill="#5fc4ac" /><path d="M1 12L6 1l5 11z" fill="#48ac94" stroke="#b4f3e0" /></svg>
                                <ScrollGap />
                                <ScrollThumb />
                                <svg width="12" height="13"><path d="M0 0h12v13H0z" fill="#5fc4ac" /><path d="M1 1h10L6 12z" fill="#48ac94" stroke="#b4f3e0" /></svg>
                            </ScrollTrack>
                        </ListWell>
                        <Selected>Selected : 0</Selected>
                    </Sidebar>
                    <Board><BoardDrawing /></Board>
                </WorkRow>
                <CommandRow>
                    <CommandButton aria-label="Diagonal"><CommandIcon kind="diag" /></CommandButton>
                    <CommandButton aria-label="Angle"><CommandIcon kind="angle" /></CommandButton>
                    <CommandButton $on aria-label="Grid"><CommandIcon kind="grid" /></CommandButton>
                    <CoordLabel htmlFor="coords">X Y :</CoordLabel>
                    <CoordInput id="coords" />
                    <CommandButton $on aria-label="Alert"><CommandIcon kind="bang" /></CommandButton>
                    <Message>&lt;M1&gt; - Select first area corner</Message>
                </CommandRow>
                <MessageBar />
            </EditorBody>
        </EditorWindow>
    );
}

function Popview() {
    return (
        <PopWindow>
            <PopTitle>
                <AppIcon />
                <span>Popview - 1</span>
                <button aria-label="Close window">x</button>
            </PopTitle>
            <PopClient>
                <PopMain>
                    <PopCanvas><PopDrawing /></PopCanvas>
                    <ToolColumn>
                        {Object.keys(toolPaths).map(kind => (
                            <button key={kind} aria-label={kind}><ToolIcon kind={kind} /></button>
                        ))}
                    </ToolColumn>
                </PopMain>
                <PopClose>Close</PopClose>
            </PopClient>
        </PopWindow>
    );
}

function SheetRibbon() {
    return (
        <Ribbon>
            <RibbonGroup label="剪贴板" w={72} launcher>
                <GroupBody $pad="4px 0 0">
                    <PasteButton><PasteIcon />粘贴<Caret /></PasteButton>
                    <Stack $gap={7} $align="center">
                        <button aria-label="剪切"><ScissorsIcon /></button>
                        <button aria-label="复制"><CopyIcon /></button>
                        <button aria-label="格式刷"><BrushIcon /></button>
                    </Stack>
                </GroupBody>
            </RibbonGroup>
            <RibbonGroup label="字体" w={232} launcher>
                <GroupBody $column $gap={11} $pad="10px 2px 0">
                    <Line>
                        <Line $gap={1}>
                            <Combo $w={130}><select aria-label="字体"><option>宋体</option></select><Caret /></Combo>
                            <Combo $w={46}><select aria-label="字号"><option>12</option></select><Caret /></Combo>
                        </Line>
                        <Segment>
                            <Tool><Glyph $size={16}>A</Glyph><Caret /></Tool>
                            <Tool><Glyph $size={13}>A</Glyph><Caret /></Tool>
                        </Segment>
                    </Line>
                    <Line>
                        <Segment>
                            <Tool><Glyph>B</Glyph></Tool>
                            <Tool><Glyph $italic>I</Glyph></Tool>
                            <Tool $w={34}><Glyph $under>U</Glyph><Caret /></Tool>
                        </Segment>
                        <Segment><Tool $w={32} aria-label="边框"><BorderIcon /><Caret /></Tool></Segment>
                        <Segment>
                            <Tool $w={32} aria-label="填充"><FillIcon /><Caret /></Tool>
                            <Tool $w={32}><FontColor>A</FontColor><Caret /></Tool>
                        </Segment>
                        <Segment><Tool $w={32}><Wen>wén<b>文</b></Wen><Caret /></Tool></Segment>
                    </Line>
                </GroupBody>
            </RibbonGroup>
            <RibbonGroup label="对齐方式" w={165} launcher>
                <GroupBody>
                    <Stack $gap={11} $top={9}>
                        <Line>
                            <Segment>
                                <Tool aria-label="顶端对齐"><AlignIcon kind="top" /></Tool>
                                <Tool $on aria-label="垂直居中"><AlignIcon kind="middle" /></Tool>
                                <Tool aria-label="底端对齐"><AlignIcon kind="bottom" /></Tool>
                            </Segment>
                            <Segment><Tool $w={30} aria-label="方向"><AngleTextIcon /><Caret /></Tool></Segment>
                        </Line>
                        <Line>
                            <Segment>
                                <Tool aria-label="左对齐"><AlignIcon kind="left" /></Tool>
                                <Tool aria-label="居中"><AlignIcon kind="center" /></Tool>
                                <Tool aria-label="右对齐"><AlignIcon kind="right" /></Tool>
                            </Segment>
                            <Segment>
                                <Tool aria-label="减少缩进"><AlignIcon kind="outdent" /></Tool>
                                <Tool aria-label="增加缩进"><AlignIcon kind="indent" /></Tool>
                            </Segment>
                        </Line>
                    </Stack>
                    <Divider />
                    <Stack $gap={17} $top={12}>
                        <Tool $w={18} aria-label="自动换行"><WrapIcon /></Tool>
                        <Tool $w={26} aria-label="合并后居中"><MergeIcon /><Caret /></Tool>
                    </Stack>
                </GroupBody>
            </RibbonGroup>
            <RibbonGroup label="数字" w={87} launcher>
                <GroupBody $column $gap={3} $pad="2px 2px 0">
                    <Combo $w={80}><select aria-label="数字格式"><option>常规</option></select><Caret /></Combo>
                    <Line>
                        <Segment>
                            <Tool $w={34} aria-label="货币"><MoneyIcon /><Caret /></Tool>
                            <Tool>%</Tool>
                            <Tool><Glyph $size={20}>,</Glyph></Tool>
                        </Segment>
                    </Line>
                    <Line>
                        <Segment>
                            <Tool><Decimals><SmallArrow />.0<br />.00</Decimals></Tool>
                            <Tool><Decimals>.00<br /><SmallArrow right />.0</Decimals></Tool>
                        </Segment>
                    </Line>
                </GroupBody>
            </RibbonGroup>
            <RibbonGroup label="样式" w={116}>
                <GroupBody $column $pad="0 5px">
                    <StyleButton><StyleIcon kind="cond" /><span>条件格式</span><Caret /></StyleButton>
                    <StyleButton><StyleIcon kind="table" /><span>套用表格格式</span><Caret /></StyleButton>
                    <StyleButton><StyleIcon kind="cell" /><span>单元格样式</span><Caret /></StyleButton>
                </GroupBody>
            </RibbonGroup>
            <RibbonGroup label="单元格" w={66}>
                <GroupBody $column $pad="0 5px">
                    <StyleButton aria-label="插入单元格"><StyleIcon kind="insert" /></StyleButton>
                    <StyleButton aria-label="删除单元格"><StyleIcon kind="delete" /></StyleButton>
                    <StyleButton aria-label="设置格式"><StyleIcon kind="cell" /></StyleButton>
                </GroupBody>
            </RibbonGroup>
        </Ribbon>
    );
}

function Spreadsheet() {
    return (
        <SheetWindow>
            <SheetTitle>
                <QuickBar>
                    <button aria-label="保存"><SaveIcon /></button>
                    <button aria-label="撤销"><UndoIcon /></button>
                    <Caret />
                    <button aria-label="恢复"><UndoIcon redo /></button>
                    <Caret color="#a4c3d6" />
                </QuickBar>
                <QuickMore aria-label="更多"><Caret color="#234" /></QuickMore>
                <h1>EV27200JA0制作单  [兼容模式] - Microsoft Excel</h1>
            </SheetTitle>
            <Orb aria-label="Office"><OfficeMark /></Orb>
            <Tabs>
                {["开始", "插入", "页面布局", "公式", "数据", "审阅", "视图"].map((name, i) => (
                    <Tab key={name} $active={i === 0}>{name}</Tab>
                ))}
            </Tabs>
            <SheetRibbon />
            <FormulaRow>
                <NameBox><input aria-label="名称框" defaultValue="F10" /><Caret color="#000" /></NameBox>
                <FxButton><i /><span>fx</span></FxButton>
                <FormulaInput aria-label="编辑栏" />
            </FormulaRow>
            <SheetArea>
                <Grid>
                    <colgroup><col width="33" /><col width="149" /><col /></colgroup>
                    <thead><tr><th /><th>A</th><th>B</th></tr></thead>
                    <tbody>
                        {rows.map(([n, a, b]) => (
                            <tr key={n}>
                                <th scope="row">{n}</th>
                                <td colSpan={b ? 1 : 2}>{a}</td>
                                {b && <td>{b}</td>}
                            </tr>
                        ))}
                    </tbody>
                </Grid>
                <Callout>要求3拼桥连交<br />货，实际制作人<br />多加了邮票孔</Callout>
                <PointerArrow width="175" height="54" viewBox="0 0 175 54">
                    <path d="M6 35L36 17q8-3 9 7L164 2q8-1 8 5t-6 6L46 35v6q-1 6-9 5L9 42q-7-2-3-7z" fill="#ff6464" fillOpacity=".8" />
                </PointerArrow>
            </SheetArea>
            <SheetTabs>
                <NavButtons>
                    <button aria-label="第一张"><svg width="8" height="8"><path d="M0 0h2v8H0zM7 0v8L2 4z" fill="#15428b" /></svg></button>
                    <button aria-label="上一张"><svg width="8" height="8"><path d="M6 0v8L1 4z" fill="#15428b" /></svg></button>
                    <button aria-label="下一张"><svg width="8" height="8"><path d="M1 0v8l5-4z" fill="#15428b" /></svg></button>
                    <button aria-label="最后一张"><svg width="8" height="8"><path d="M6 0h2v8H6zM0 0v8l5-4z" fill="#15428b" /></svg></button>
                </NavButtons>
                <SheetTab>制作单</SheetTab>
                <svg width="44" height="17">
                    <path d="M0 17L12 0h31L31 17z" fill="#d6e5f8" stroke="#6f8fbd" />
                    <path d="M16 5h9v8h-6l-3-3z" fill="#fff" stroke="#52698c" /><path d="M13 4h6M16 1v6" stroke="#f09a1a" strokeWidth="2" />
                </svg>
                <ScrollEnd>
                    <SplitHandle />
                    <svg width="6" height="9"><path d="M5 0v9L0 4z" fill="#37527e" /></svg>
                    <HThumb><svg width="8" height="7"><path d="M.5 0v7M2.500 0v7M4.500 0v7M6.500 0v7" stroke="#7a879c" /></svg></HThumb>
                </ScrollEnd>
            </SheetTabs>
            <StatusBar>
                <span>就绪</span>
                <ViewButtons>
                    <button aria-label="普通"><svg width="13" height="12"><path d="M.5.5h12v11H.5zM0 4.500h13M0 8.500h13M4.500 0v12M8.500 0v12" fill="#fff" stroke="#555" /></svg></button>
                    <button aria-label="页面布局视图"><svg width="13" height="12"><path d="M.5.5h12v11H.5zM3.500 2.500h6v7h-6zM5 4.500h3M5 6.500h3" fill="#fff" stroke="#555" /></svg></button>
                    <button aria-label="分页预览"><svg width="13" height="12"><path d="M.5.5h12v11H.5zM6.500 0v7M0 7.500h13" fill="#fff" stroke="#555" /></svg></button>
                </ViewButtons>
            </StatusBar>
        </SheetWindow>
    );
}

function InputMethod() {
    return (
        <InputBar>
            <ImeLogo width="30" height="30" viewBox="0 0 30 30">
                <path d="M2 6l21-4q3 0 3 3l3 18q0 3-3 3L8 29q-3 0-3-3L1 9q0-2 1-3z" fill="#f0532a" />
                <path d="M21 9c-5-3-12-1-12 3s12 2 12 6-8 5-13 2" fill="none" stroke="#fff" strokeWidth="4" />
            </ImeLogo>
            <span>中</span>
            <svg width="16" height="16" viewBox="0 0 16 16"><path d="M10 1c6 4 5 12-1 13-4 1-7-1-8-3 6 1 10-4 9-10z" fill="#1c6fbe" /></svg>
            <svg width="14" height="14" viewBox="0 0 14 14"><circle cx="3" cy="4" r="2" fill="none" stroke="#1c6fbe" strokeWidth="1.500" /><path d="M8 6h4v3q0 3-4 4 2-2 1-3H8z" fill="#1c6fbe" /></svg>
            <svg width="16" height="12" viewBox="0 0 16 12"><path d="M.5.5h15v11H.5z" fill="#fff" stroke="#1c6fbe" strokeWidth="2" /><path d="M2 3.500h12M2 6h12M4 8.500h8" stroke="#1c6fbe" strokeDasharray="2 1" /></svg>
            <svg width="16" height="14" viewBox="0 0 16 14"><circle cx="8" cy="4" r="3" fill="#b4bfd0" /><path d="M2 14q0-7 6-7t6 7z" fill="#b4bfd0" /></svg>
            <svg width="16" height="14" viewBox="0 0 16 14"><path d="M4 0q4 3 8 0l4 3-2 4-2-1v8H4V6L2 7 0 3z" fill="#1c6fbe" /></svg>
            <svg width="16" height="15" viewBox="0 0 16 15"><path d="M1 12l7-7q-1-4 4-5L10 3l2 2 3-2q0 5-5 5l-7 6q-2 0-2-2z" fill="#1c6fbe" /></svg>
        </InputBar>
    );
}

const ConsoleIcon = () => (
    <svg width="32" height="20"><path d="M0 0h32v20H0z" fill="#d5d5d5" stroke="#222" /><path d="M2 2h28v6H2z" fill="#10107c" /><path d="M21 5h8" stroke="#fff" strokeWidth="2" strokeDasharray="2 1" /><path d="M2 10h28v10H2z" fill="#777" /></svg>
);

const taskShapes = {
    folder: <><path d="M4 6q6-5 12 2l12 1v11H8z" fill="#1f9ba4" /><path d="M14 9h12v8z" fill="#335" /></>,
    disk: <><path d="M1 1h30v20H1z" fill="#1c4fae" /><path d="M9 1h13v9H9z" fill="#e8eef8" /><path d="M17 2h3v7h-3z" fill="#1c4fae" /></>,
    red: <path d="M6 16l6-10 13-3-3 19z" fill="#df3826" />,
    shell: <><path d="M3 18q3-15 13-15t13 15z" fill="#f4c64c" /><path d="M10 17L12 5M16 17V4M22 17L20 5" stroke="#fff4c8" /></>,
    green: <path d="M8 20V4h12v4h5l-4 5" fill="none" stroke="#1d944c" strokeWidth="2" />,
    frame: <><path d="M6 3h20v18H6z" fill="#f4f6fa" stroke="#778" /><path d="M8 5h16v4H8z" fill="#ef9a43" /></>,
    lines: <><path d="M4 3h24v18H4z" fill="#f6fbff" /><path d="M6 7h20M6 11h20" stroke="#2b8fc0" strokeWidth="2" /></>,
    word: <><path d="M8 3h14l6 6v12H8z" fill="#fff" stroke="#789" /><path d="M4 6h13v13H4z" fill="#dfe6f7" stroke="#4a63a8" /><path d="M7 9l2 8 2-6 2 6 2-8" fill="none" stroke="#4a63a8" strokeWidth="2" /></>,
    bird: <><path d="M3 4h26v16H3z" fill="#1a62ae" /><path d="M6 13q9-10 20-6-9 1-11 10z" fill="#eef6ff" /></>,
    note: <path d="M8 5l16-2 3 18H5z" fill="#b8cdd0" stroke="#5f7f86" />,
    excel: <><path d="M8 3h14l6 6v12H8z" fill="#fff" stroke="#789" /><path d="M4 6h13v13H4z" fill="#e2f0df" stroke="#3c8c40" /><path d="M7 9l7 8M14 9l-7 8" stroke="#3c8c40" strokeWidth="2" /></>
};

const taskRuns = [["folder"], ["disk"], ["console", "console", "console", "console"], ["red"], ["shell"], ["green"], ["frame"], ["lines"], ["word"], ["bird", "bird"], ["note"], ["excel", "excel"], ["folder"]];

function Tasks() {
    return (
        <Taskbar>
            <svg width="107" height="13" viewBox="0 0 107 13">
                <circle cx="27" cy="18" r="17" fill="#8295a8" stroke="#c8d7e4" /><path d="M18 8q5-3 9 0v5h-9z" fill="#e2682a" /><path d="M28 9q4 2 7-1v5h-7z" fill="#7cb342" />
                <rect x="69" y="5" width="29" height="20" rx="4" fill="#fff" /><path d="M76 6l9 7h4V8z" fill="#ef7a1a" /><path d="M76 4l8 2" stroke="#3a9a35" strokeWidth="3" />
            </svg>
            {taskRuns.map((run, i) => (
                <TaskRun key={i}>
                    {run.map((kind, j) => (
                        <TaskButton key={j} aria-label={kind}>
                            {kind === "console" ? <ConsoleIcon /> : <svg width="32" height="21">{taskShapes[kind]}</svg>}
                        </TaskButton>
                    ))}
                </TaskRun>
            ))}
            <svg width="160" height="13" viewBox="0 0 160 13">
                <rect x="14" y="9" width="13" height="8" rx="2" fill="#f06a35" /><path d="M46 12h6" stroke="#fff" strokeWidth="2" /><path d="M78 12h6" stroke="#d33" strokeWidth="2" /><path d="M146 12h10" stroke="#22b4e6" strokeWidth="2" />
            </svg>
            <Clock>9:08</Clock>
        </Taskbar>
    );
}

export default function App() {
    return (
        <>
            <GlobalStyle />
            <Desktop>
                <Editor />
                <Tasks />
                <Popview />
                <Spreadsheet />
                <InputMethod />
            </Desktop>
        </>
    );
}
